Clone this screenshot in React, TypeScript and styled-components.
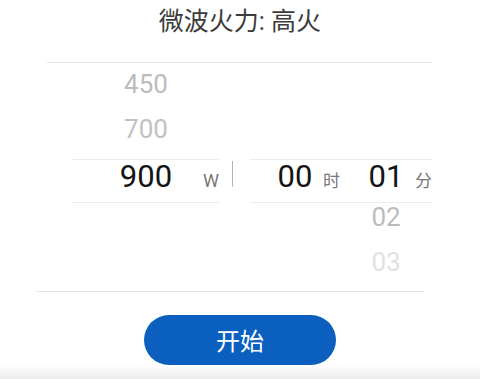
import React from "react";
import styled, { createGlobalStyle } from "styled-components";

const Global = createGlobalStyle`
  html, body { margin: 0; padding: 0; background: #ffffff; }
  body { font-family: Roboto, "Noto Sans CJK SC", sans-serif; }
`;

const Page = styled.div`
  width: 480px;
  height: 379px;
  display: flex;
  flex-direction: column;
  background: #ffffff;
  overflow: hidden;
`;

const Title = styled.h1`
  margin: 0;
  height: 44px;
  line-height: 44px;
  text-align: center;
  font-size: 25px;
  font-weight: 400;
  color: #3c3c3c;
  font-family: Roboto, "Noto Sans CJK SC", sans-serif;
`;

const Rule = styled.div<{ $left: number; $width: number; $top: number }>`
  margin-left: ${(p) => p.$left}px;
  margin-top: ${(p) => p.$top}px;
  width: ${(p) => p.$width}px;
  height: 1px;
  background: #e4e4e4;
  flex-shrink: 0;
`;

const Wheel = styled.div`
  display: grid;
  padding-left: 73px;
  grid-template-columns: 146px 31px 90px 92px;
  grid-template-rows: 44px 52px 44px 37px 51px;
`;

type Tone = "far" | "near" | "faint" | "sel";

const toneColor: Record<Tone, string> = {
  near: "#bcbcbc",
  far: "#c2c2c2",
  faint: "#e2e2e2",
  sel: "#141414",
};

const Cell = styled.div<{ $lh: number; $col: number; $row: number }>`
  grid-column: ${(p) => p.$col};
  grid-row: ${(p) => p.$row};
  line-height: ${(p) => p.$lh}px;
  text-align: center;
  font-size: 26px;
`;

const Num = styled.span<{ $tone: Tone }>`
  color: ${(p) => toneColor[p.$tone]};
  font-family: Roboto, sans-serif;
`;

const SelCell = styled.div<{ $col: number }>`
  grid-column: ${(p) => p.$col};
  grid-row: 3;
  display: grid;
  align-items: baseline;
  border-top: 1px solid #ececec;
  border-bottom: 1px solid #ececec;
  box-sizing: border-box;
`;

const SelNum = styled.span`
  grid-area: 1 / 1;
  justify-self: center;
  font-family: Roboto, sans-serif;
  font-size: 31px;
  line-height: 33px;
  color: #141414;
`;

const Unit = styled.span<{ $size: number }>`
  grid-area: 1 / 1;
  justify-self: end;
  font-family: Roboto, "Noto Sans CJK SC", sans-serif;
  font-size: ${(p) => p.$size}px;
  color: #777777;
`;

const Sep = styled.div`
  grid-column: 2;
  grid-row: 3;
  width: 1px;
  height: 26px;
  margin-left: 13px;
  margin-top: 2px;
  background: #b4b4b4;
`;

const Gap = styled.div`
  grid-column: 2;
  grid-row: 3;
`;

const ButtonRow = styled.div`
  display: flex;
  justify-content: center;
  margin-top: 23px;
`;

const StartButton = styled.button`
  width: 192px;
  height: 50px;
  border: none;
  border-radius: 25px;
  background: #0b5fbf;
  color: #ffffff;
  font-size: 24px;
  font-family: "Noto Sans CJK SC", sans-serif;
  padding: 0;
  line-height: 50px;
`;

const BottomShade = styled.div`
  flex: 1;
  background: linear-gradient(#ffffff, #ececec);
`;

export default function App() {
  return (
    <Page>
      <Global />
      <Title>微波火力: 高火</Title>
      <Rule $left={47} $width={385} $top={18} />
      <Wheel>
        <Cell $col={1} $row={1} $lh={43}>
          <Num $tone="near">450</Num>
        </Cell>
        <Cell $col={1} $row={2} $lh={45}>
          <Num $tone="far">700</Num>
        </Cell>
        <SelCell $col={1}>
          <SelNum>900</SelNum>
          <Unit $size={18}>W</Unit>
        </SelCell>
        <Sep />
        <SelCell $col={3}>
          <SelNum>00</SelNum>
          <Unit $size={17}>时</Unit>
        </SelCell>
        <SelCell $col={4}>
          <SelNum>01</SelNum>
          <Unit $size={17}>分</Unit>
        </SelCell>
        <Cell $col={4} $row={4} $lh={29}>
          <Num $tone="near">02</Num>
        </Cell>
        <Cell $col={4} $row={5} $lh={45}>
          <Num $tone="faint">03</Num>
        </Cell>
      </Wheel>
      <Rule $left={37} $width={387} $top={0} />
      <ButtonRow>
        <StartButton>开始</StartButton>
      </ButtonRow>
      <BottomShade />
    </Page>
  );
}
